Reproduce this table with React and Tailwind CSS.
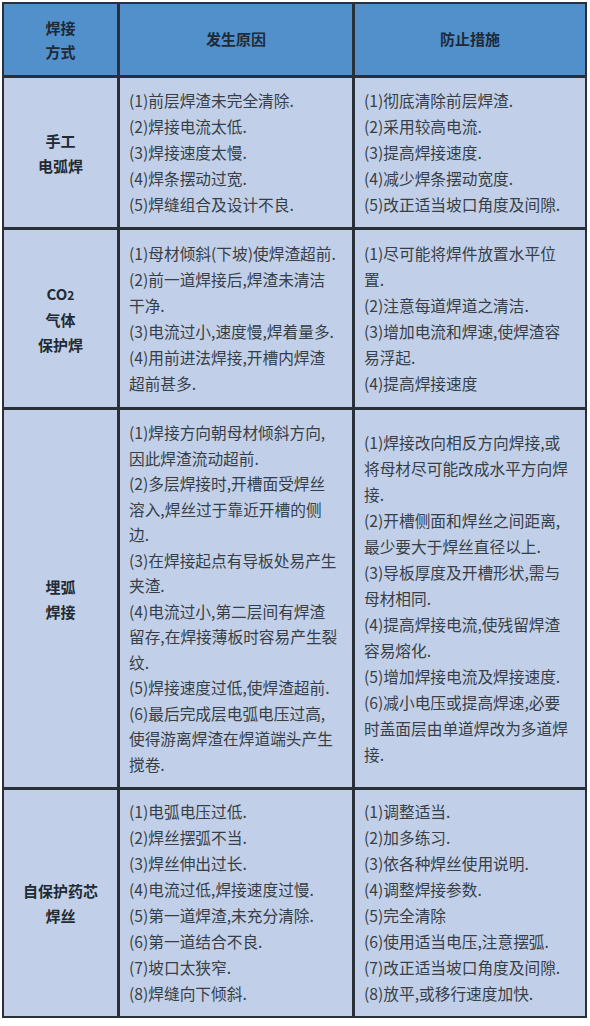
const rows = [
  {
    h: 'h-[149px]',
    method: ['手工', '电弧焊'],
    cause: [
      '(1)前层焊渣未完全清除.',
      '(2)焊接电流太低.',
      '(3)焊接速度太慢.',
      '(4)焊条摆动过宽.',
      '(5)焊缝组合及设计不良.',
    ],
    fix: [
      '(1)彻底清除前层焊渣.',
      '(2)采用较高电流.',
      '(3)提高焊接速度.',
      '(4)减少焊条摆动宽度.',
      '(5)改正适当坡口角度及间隙.',
    ],
  },
  {
    h: 'h-[177px]',
    method: ['CO2', '气体', '保护焊'],
    cause: [
      '(1)母材倾斜(下坡)使焊渣超前.',
      '(2)前一道焊接后,焊渣未清洁',
      '干净.',
      '(3)电流过小,速度慢,焊着量多.',
      '(4)用前进法焊接,开槽内焊渣',
      '超前甚多.',
    ],
    fix: [
      '(1)尽可能将焊件放置水平位',
      '置.',
      '(2)注意每道焊道之清洁.',
      '(3)增加电流和焊速,使焊渣容',
      '易浮起.',
      '(4)提高焊接速度',
    ],
  },
  {
    h: 'h-[377px]',
    tight: true,
    method: ['埋弧', '焊接'],
    cause: [
      '(1)焊接方向朝母材倾斜方向,',
      '因此焊渣流动超前.',
      '(2)多层焊接时,开槽面受焊丝',
      '溶入,焊丝过于靠近开槽的侧',
      '边.',
      '(3)在焊接起点有导板处易产生',
      '夹渣.',
      '(4)电流过小,第二层间有焊渣',
      '留存,在焊接薄板时容易产生裂',
      '纹.',
      '(5)焊接速度过低,使焊渣超前.',
      '(6)最后完成层电弧电压过高,',
      '使得游离焊渣在焊道端头产生',
      '搅卷.',
    ],
    fix: [
      '(1)焊接改向相反方向焊接,或',
      '将母材尽可能改成水平方向焊',
      '接.',
      '(2)开槽侧面和焊丝之间距离,',
      '最少要大于焊丝直径以上.',
      '(3)导板厚度及开槽形状,需与',
      '母材相同.',
      '(4)提高焊接电流,使残留焊渣',
      '容易熔化.',
      '(5)增加焊接电流及焊接速度.',
      '(6)减小电压或提高焊速,必要',
      '时盖面层由单道焊改为多道焊',
      '接.',
    ],
  },
  {
    h: 'h-[226px]',
    method: ['自保护药芯', '焊丝'],
    cause: [
      '(1)电弧电压过低.',
      '(2)焊丝摆弧不当.',
      '(3)焊丝伸出过长.',
      '(4)电流过低,焊接速度过慢.',
      '(5)第一道焊渣,未充分清除.',
      '(6)第一道结合不良.',
      '(7)坡口太狭窄.',
      '(8)焊缝向下倾斜.',
    ],
    fix: [
      '(1)调整适当.',
      '(2)加多练习.',
      '(3)依各种焊丝使用说明.',
      '(4)调整焊接参数.',
      '(5)完全清除',
      '(6)使用适当电压,注意摆弧.',
      '(7)改正适当坡口角度及间隙.',
      '(8)放平,或移行速度加快.',
    ],
  },
]

function MethodLine({ text }) {
  if (text === 'CO2') {
    return (
      <div>
        CO<span className="text-[12px]">2</span>
      </div>
    )
  }
  return <div>{text}</div>
}

export default function App() {
  return (
    <div
      className="w-[590px] h-[1026px] bg-white pt-[2px] pl-[2px]"
      style={{ fontFamily: '"Noto Sans CJK SC", "Noto Sans", sans-serif' }}
    >
      <div className="inline-grid grid-cols-[113px_232px_230px] gap-[3px] p-[2px] bg-[#2a3038]">
        {/* Header */}
        <div className="h-[71px] bg-[#5190cb] flex flex-col items-center justify-center text-[15px] font-bold leading-[24px] text-[#1d2a38]">
          <div>焊接</div>
          <div>方式</div>
        </div>
        <div className="h-[71px] bg-[#5190cb] flex items-center justify-center text-[15px] font-bold text-[#1d2a38]">
          发生原因
        </div>
        <div className="h-[71px] bg-[#5190cb] flex items-center justify-center text-[15px] font-bold text-[#1d2a38]">
          防止措施
        </div>

        {rows.map((r, i) => (
          <div key={i} className="contents">
            <div
              className={`${r.h} bg-[#c1d0e8] flex flex-col items-center justify-center text-[15px] font-bold leading-[25px] text-[#222a33]`}
            >
              {r.method.map((m) => (
                <MethodLine key={m} text={m} />
              ))}
            </div>
            <div
              className={`${r.h} bg-[#c1d0e8] flex flex-col justify-center pl-[9px] text-[15.7px] text-[#383e47] whitespace-nowrap ${
                r.tight ? 'leading-[25.5px]' : 'leading-[26px]'
              }`}
            >
              {r.cause.map((c, j) => (
                <div key={j}>{c}</div>
              ))}
            </div>
            <div
              className={`${r.h} bg-[#c1d0e8] flex flex-col justify-center pl-[9px] text-[15.7px] leading-[26px] text-[#383e47] whitespace-nowrap`}
            >
              {r.fix.map((c, j) => (
                <div key={j}>{c}</div>
              ))}
            </div>
          </div>
        ))}
      </div>
    </div>
  )
}
